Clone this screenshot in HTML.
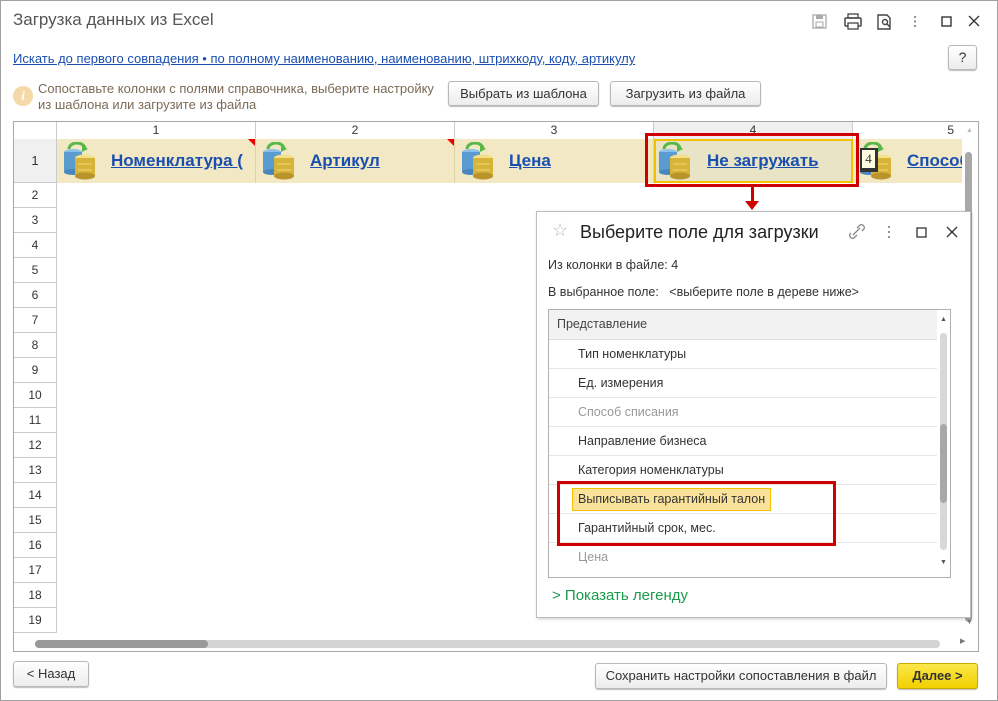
<!DOCTYPE html>
<html><head><meta charset="utf-8"><style>
*{box-sizing:border-box;margin:0;padding:0}
body{width:998px;height:701px;background:#fff;font-family:"Liberation Sans",sans-serif;position:relative;overflow:hidden;font-size:12px;color:#333}
.a{position:absolute}
.win{left:0;top:0;width:998px;height:701px;border:1px solid #a0a0a0}
.btn{position:absolute;border:1px solid #b8b8b8;border-radius:3px;background:linear-gradient(#fff,#ececec);box-shadow:0 1px 1px #bbb;text-align:center;font-size:12px;color:#333}
.rn{position:absolute;left:14px;width:43px;height:25px;border-bottom:1px solid #ccc;border-right:1px solid #ccc;text-align:center;line-height:25px;font-size:12px;color:#333;background:#fff}
.ch{position:absolute;top:122px;height:17px;border-right:1px solid #ccc;text-align:center;font-size:12px;line-height:17px;color:#333;background:#fff}
.cell{position:absolute;top:139px;height:44px;border-right:1px solid #dcd3a8;background:#f2e9c4;overflow:hidden;white-space:nowrap}
.cell a{position:absolute;left:54px;top:12px;font-size:17px;font-weight:bold;color:#1a4fb0;text-decoration:underline}
.ico{position:absolute;left:4px;top:3px;width:40px;height:38px}
.tr{position:absolute;left:549px;width:388px;height:29px;border-bottom:1px solid #e6e6e6;line-height:28px;padding-left:29px;font-size:12.5px;color:#333}
</style></head><body>
<div class="a win"></div>
<div class="a" style="left:13px;top:10px;font-size:17px;color:#555">Загрузка данных из Excel</div>
<svg class="a" style="left:812px;top:12px" width="170" height="20" viewBox="0 0 170 20">
<rect x="1" y="3" width="13" height="13" fill="none" stroke="#aaa" stroke-width="1.3"/><rect x="4" y="3" width="7" height="4" fill="#aaa"/><rect x="4" y="10" width="7" height="5" fill="none" stroke="#aaa"/>
<rect x="33" y="6" width="16" height="8" rx="1" fill="none" stroke="#444" stroke-width="1.5"/><rect x="36" y="2" width="10" height="4" fill="none" stroke="#444" stroke-width="1.3"/><rect x="36" y="11" width="10" height="6" fill="#fff" stroke="#444" stroke-width="1.3"/>
<path d="M66 3h9l3 3v11h-12z" fill="none" stroke="#444" stroke-width="1.4"/><circle cx="73" cy="10" r="2.5" fill="none" stroke="#444" stroke-width="1.4"/><path d="M75 12l3 3" stroke="#444" stroke-width="1.5"/>
<circle cx="103" cy="5" r="1.1" fill="#888"/><circle cx="103" cy="9.5" r="1.1" fill="#888"/><circle cx="103" cy="14" r="1.1" fill="#888"/>
<rect x="130" y="5" width="9" height="9" fill="none" stroke="#333" stroke-width="1.4"/>
<path d="M157 4l10 10M167 4l-10 10" stroke="#333" stroke-width="1.3"/>
</svg>
<div class="a" style="left:13px;top:51px;font-size:13px;color:#1a4fb0;text-decoration:underline">Искать до первого совпадения • по полному наименованию, наименованию, штрихкоду, коду, артикулу</div>
<div class="btn" style="left:948px;top:45px;width:29px;height:25px;line-height:23px;font-size:14px">?</div>
<div class="a" style="left:13px;top:86px;width:20px;height:20px;border-radius:50%;background:#f6d9a8;color:#fff;font:italic bold 13px 'Liberation Serif',serif;text-align:center;line-height:20px">i</div>
<div class="a" style="left:38px;top:81px;font-size:13px;line-height:16px;color:#7a6a55">Сопоставьте колонки с полями справочника, выберите настройку<br>из шаблона или загрузите из файла</div>
<div class="btn" style="left:448px;top:81px;width:151px;height:25px;line-height:23px;font-size:13px">Выбрать из шаблона</div>
<div class="btn" style="left:610px;top:81px;width:151px;height:25px;line-height:23px;font-size:13px">Загрузить из файла</div>

<div class="a" style="left:13px;top:121px;width:966px;height:531px;border:1px solid #a8a8a8"></div>
<div class="ch" style="left:14px;width:43px"></div>
<div class="ch" style="left:57px;width:199px">1</div>
<div class="ch" style="left:256px;width:199px">2</div>
<div class="ch" style="left:455px;width:199px">3</div>
<div class="ch" style="left:654px;width:199px;background:#f0f0f0">4</div>
<div class="ch" style="left:853px;width:109px;text-align:right;padding-right:8px;border:none">5</div>
<div class="a" style="left:14px;top:139px;width:43px;height:44px;background:#f0f0f0;border-right:1px solid #ccc;border-bottom:1px solid #ccc;text-align:center;line-height:44px;font-size:13px">1</div>
<svg width="0" height="0" style="position:absolute"><defs>
<g id="db"><ellipse cx="12" cy="10" rx="9" ry="3" fill="#8cc0e8"/><rect x="3" y="10" width="18" height="20" fill="#5a9bd0"/><ellipse cx="12" cy="30" rx="9" ry="3" fill="#4a86be"/><ellipse cx="24" cy="16" rx="10" ry="3.5" fill="#f3e08a"/><rect x="14" y="16" width="20" height="18" fill="#d6b43a"/><ellipse cx="24" cy="34" rx="10" ry="3.5" fill="#b8942a"/><path d="M17 22h14M17 28h14" stroke="#f0d870" stroke-width="1"/><path d="M8 7a8 6 0 0 1 16 0" fill="none" stroke="#5ab84a" stroke-width="3"/><path d="M21 3l6 4-6 3z" fill="#5ab84a"/></g></defs></svg>
<div class="cell" style="left:57px;width:199px"><svg class="ico"><use href="#db"/></svg><a>Номенклатура (</a><div class="a" style="right:0;top:0;border-top:7px solid #e00;border-left:7px solid transparent"></div></div>
<div class="cell" style="left:256px;width:199px"><svg class="ico"><use href="#db"/></svg><a>Артикул</a><div class="a" style="right:0;top:0;border-top:7px solid #e00;border-left:7px solid transparent"></div></div>
<div class="cell" style="left:455px;width:199px"><svg class="ico"><use href="#db"/></svg><a>Цена</a></div>
<div class="cell" style="left:654px;width:199px;background:#e9e4c6;border:2px solid #f2c200"><svg class="ico" style="left:0;top:1px"><use href="#db"/></svg><a style="left:51px;top:10px">Не загружать</a></div>
<div class="cell" style="left:853px;width:109px;border:none"><svg class="ico"><use href="#db"/></svg><a>Способ</a></div>
<div class="a" style="left:860px;top:148px;width:18px;height:24px;background:#333"></div>
<div class="a" style="left:861px;top:149px;width:15px;height:20px;background:#fffbe0;border:1px solid #333;font:13px 'Liberation Serif',serif;text-align:center;line-height:18px">4</div>
<div class="a" style="left:645px;top:133px;width:214px;height:54px;border:3px solid #d00000"></div>
<div class="a" style="left:751px;top:187px;width:3px;height:15px;background:#d00000"></div>
<div class="a" style="left:745px;top:201px;border-top:9px solid #d00000;border-left:7px solid transparent;border-right:7px solid transparent"></div>

<div class="rn" style="top:183px">2</div><div class="rn" style="top:208px">3</div><div class="rn" style="top:233px">4</div><div class="rn" style="top:258px">5</div><div class="rn" style="top:283px">6</div><div class="rn" style="top:308px">7</div><div class="rn" style="top:333px">8</div><div class="rn" style="top:358px">9</div><div class="rn" style="top:383px">10</div><div class="rn" style="top:408px">11</div><div class="rn" style="top:433px">12</div><div class="rn" style="top:458px">13</div><div class="rn" style="top:483px">14</div><div class="rn" style="top:508px">15</div><div class="rn" style="top:533px">16</div><div class="rn" style="top:558px">17</div><div class="rn" style="top:583px">18</div><div class="rn" style="top:608px;height:25px">19</div>
<div class="a" style="left:965px;top:152px;width:7px;height:470px;background:#a8a8a8;border-radius:4px"></div>
<div class="a" style="left:966px;top:127px;font-size:7px;color:#bbb">▲</div>
<div class="a" style="left:966px;top:619px;font-size:7px;color:#777">▼</div>
<div class="a" style="left:35px;top:640px;width:905px;height:8px;background:#d4d4d4;border-radius:4px"></div>
<div class="a" style="left:35px;top:640px;width:173px;height:8px;background:#999;border-radius:4px"></div>
<div class="a" style="left:960px;top:637px;font-size:7px;color:#777">▶</div>

<div class="a" style="left:536px;top:211px;width:435px;height:407px;background:#fff;border:1px solid #bdbdbd;box-shadow:1px 1px 3px rgba(0,0,0,.2)"></div>
<div class="a" style="left:552px;top:220px;font-size:18px;color:#bbb">☆</div>
<div class="a" style="left:580px;top:222px;font-size:18px;color:#222">Выберите поле для загрузки</div>
<svg class="a" style="left:848px;top:222px" width="115" height="20"><path d="M5 13l7-7M3 11l-1 1a3 3 0 0 0 4 4l3-3M14 9l2-2a3 3 0 0 0-4-4l-3 3" fill="none" stroke="#888" stroke-width="1.3"/><circle cx="41" cy="5" r="1.1" fill="#888"/><circle cx="41" cy="10" r="1.1" fill="#888"/><circle cx="41" cy="15" r="1.1" fill="#888"/><rect x="69" y="6" width="9" height="9" fill="none" stroke="#333" stroke-width="1.3"/><path d="M99 5l10 10M109 5l-10 10" stroke="#333" stroke-width="1.3"/></svg>
<div class="a" style="left:548px;top:258px;font-size:12.5px">Из колонки в файле: 4</div>
<div class="a" style="left:548px;top:285px;font-size:12.5px">В выбранное поле:&nbsp;&nbsp;&nbsp;&lt;выберите поле в дереве ниже&gt;</div>
<div class="a" style="left:548px;top:309px;width:403px;height:269px;border:1px solid #b0b0b0"></div>
<div class="a" style="left:549px;top:310px;width:388px;height:30px;background:#f2f2f2;border-bottom:1px solid #ddd;line-height:29px;padding-left:8px;color:#444;font-size:12.5px">Представление</div>
<div class="tr" style="top:340px">Тип номенклатуры</div>
<div class="tr" style="top:369px">Ед. измерения</div>
<div class="tr" style="top:398px;color:#999">Способ списания</div>
<div class="tr" style="top:427px">Направление бизнеса</div>
<div class="tr" style="top:456px">Категория номенклатуры</div>
<div class="tr" style="top:485px"><span style="position:absolute;left:23px;top:3px;height:23px;line-height:21px;padding:0 5px;background:#fbe29a;border:1px solid #f2c200">Выписывать гарантийный талон</span></div>
<div class="tr" style="top:514px">Гарантийный срок, мес.</div>
<div class="tr" style="top:543px;color:#999;border:none">Цена</div>
<div class="a" style="left:940px;top:333px;width:7px;height:217px;background:#d8d8d8;border-radius:4px"></div>
<div class="a" style="left:940px;top:424px;width:7px;height:79px;background:#a8a8a8;border-radius:4px"></div>
<div class="a" style="left:940px;top:316px;font-size:7px;color:#555">▲</div>
<div class="a" style="left:940px;top:559px;font-size:7px;color:#555">▼</div>
<div class="a" style="left:557px;top:481px;width:279px;height:65px;border:3px solid #d00000"></div>
<div class="a" style="left:552px;top:587px;font-size:15px;color:#1a9a4a">&gt;&nbsp;Показать легенду</div>

<div class="btn" style="left:13px;top:661px;width:76px;height:26px;line-height:24px;font-size:13px">&lt; Назад</div>
<div class="btn" style="left:595px;top:663px;width:292px;height:26px;line-height:24px;font-size:13px">Сохранить настройки сопоставления в файл</div>
<div class="btn" style="left:897px;top:663px;width:81px;height:26px;line-height:24px;background:linear-gradient(#fbe84a,#f2d000);border-color:#c9a800;font-weight:bold;color:#333;font-size:13px">Далее &gt;</div>
</body></html>
